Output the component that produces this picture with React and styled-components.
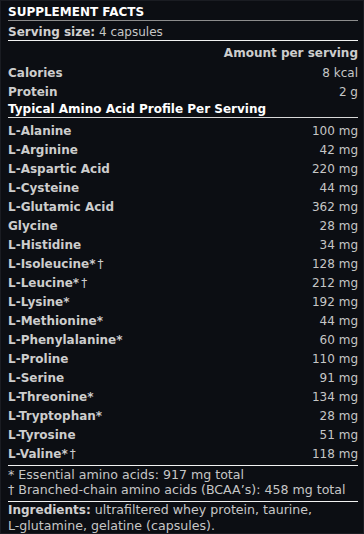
import React from "react";
import styled, { createGlobalStyle } from "styled-components";

const GlobalStyle = createGlobalStyle`
  html, body {
    margin: 0;
    padding: 0;
    background: #0c0e13;
  }
`;

const Panel = styled.div`
  box-sizing: border-box;
  width: 364px;
  height: 534px;
  padding: 4px 5px 0 7px;
  background: #0c0e13;
  border: 1px solid #1a1c22;
  font-family: "DejaVu Sans", Verdana, sans-serif;
  font-size: 12px;
  color: #c6c6c6;
`;

const Title = styled.div`
  font-weight: bold;
  color: #ffffff;
  line-height: 15px;
  border-bottom: 1px solid #8c8c8c;
`;

const Serving = styled.div`
  padding-top: 4px;
  line-height: 15px;
  border-bottom: 1px solid #f2f2f2;
  b {
    color: #d0d0d0;
  }
`;

const Section = styled.div`
  padding: ${(p) => p.$top || 0}px 0 ${(p) => p.$bottom || 0}px;
  border-bottom: ${(p) => (p.$rule ? `1px solid ${p.$rule}` : "none")};
`;

const Row = styled.div`
  display: flex;
  justify-content: space-between;
  align-items: center;
  height: 19px;
`;

const Label = styled.span`
  font-weight: bold;
  color: #cdcdcd;
`;

const Head = styled.div`
  font-weight: bold;
  color: ${(p) => (p.$white ? "#ffffff" : "#cdcdcd")};
  text-align: ${(p) => (p.$right ? "right" : "left")};
  line-height: ${(p) => p.$lh || 19}px;
`;

const Mark = styled.span`
  font-weight: normal;
  margin-left: 2px;
`;

const Note = styled.div`
  font-size: 12.6px;
  line-height: ${(p) => p.$lh}px;
  b {
    color: #d0d0d0;
    font-size: 12px;
  }
`;

const aminos = [
  ["L-Alanine", "", "100 mg"],
  ["L-Arginine", "", "42 mg"],
  ["L-Aspartic Acid", "", "220 mg"],
  ["L-Cysteine", "", "44 mg"],
  ["L-Glutamic Acid", "", "362 mg"],
  ["Glycine", "", "28 mg"],
  ["L-Histidine", "", "34 mg"],
  ["L-Isoleucine*", "†", "128 mg"],
  ["L-Leucine*", "†", "212 mg"],
  ["L-Lysine*", "", "192 mg"],
  ["L-Methionine*", "", "44 mg"],
  ["L-Phenylalanine*", "", "60 mg"],
  ["L-Proline", "", "110 mg"],
  ["L-Serine", "", "91 mg"],
  ["L-Threonine*", "", "134 mg"],
  ["L-Tryptophan*", "", "28 mg"],
  ["L-Tyrosine", "", "51 mg"],
  ["L-Valine*", "†", "118 mg"],
];

export default function App() {
  return (
    <>
      <GlobalStyle />
      <Panel>
        <Title>SUPPLEMENT FACTS</Title>
        <Serving>
          <b>Serving size:</b> 4 capsules
        </Serving>
        <Section $top={3}>
          <Head $right>Amount per serving</Head>
          <Row>
            <Label>Calories</Label>
            <span>8 kcal</span>
          </Row>
          <Row>
            <Label>Protein</Label>
            <span>2 g</span>
          </Row>
        </Section>
        <Section $rule="#d8d8d8">
          <Head $white $lh={16}>
            Typical Amino Acid Profile Per Serving
          </Head>
        </Section>
        <Section $top={3} $bottom={2} $rule="#f2f2f2">
          {aminos.map(([name, mark, amount]) => (
            <Row key={name}>
              <Label>
                {name}
                {mark && <Mark>{mark}</Mark>}
              </Label>
              <span>{amount}</span>
            </Row>
          ))}
        </Section>
        <Section $top={1} $bottom={4} $rule="#f2f2f2">
          <Note $lh={15}>* Essential amino acids: 917 mg total</Note>
          <Note $lh={15}>† Branched-chain amino acids (BCAA’s): 458 mg total</Note>
        </Section>
        <Note $lh={15}>
          <b>Ingredients:</b> ultrafiltered whey protein, taurine,
          <br />
          L-glutamine, gelatine (capsules).
        </Note>
      </Panel>
    </>
  );
}
